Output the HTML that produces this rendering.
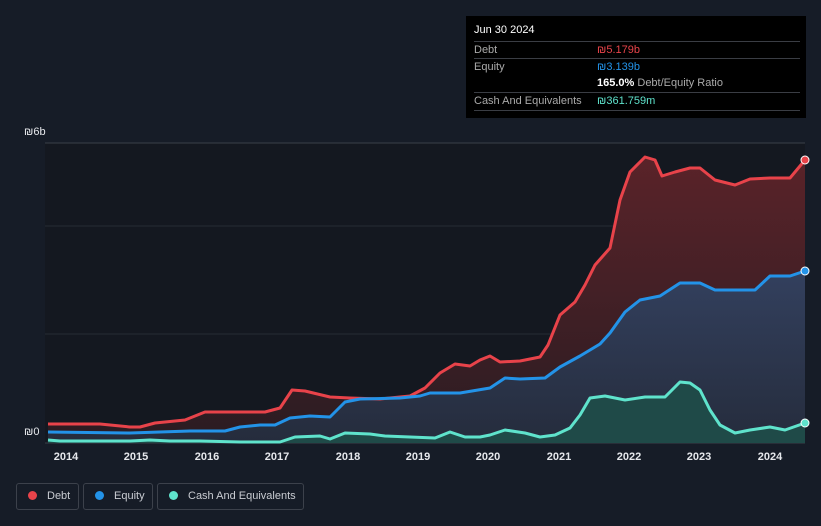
<!DOCTYPE html>
<html><head><meta charset="utf-8"><style>
body{margin:0;width:821px;height:526px;background:#161c27;font-family:"Liberation Sans",sans-serif;overflow:hidden;position:relative}
.tt{position:absolute;left:466px;top:16px;width:340px;height:102px;background:#000;color:#fff;font-size:11px}
.row{position:absolute;left:8px;width:326px;border-top:1px solid #3a3d44;height:17px;line-height:17px;color:#aaa}
.row span{position:absolute;left:123px}
.leg{position:absolute;top:483px;height:27px;border:1px solid #3c414b;border-radius:3px;color:#c9ccd2;font-size:11px;line-height:25px;box-sizing:border-box;white-space:nowrap}
.dot{display:inline-block;width:9px;height:9px;border-radius:50%;margin:0 10px 0 11px;vertical-align:-1px}
.yr{position:absolute;top:451px;color:#e6e8ec;font-size:11px;font-weight:bold;transform:translateX(-50%)}
</style></head><body>
<svg width="821" height="526" style="position:absolute;left:0;top:0">
<defs>
<linearGradient id="gd" x1="0" y1="0" x2="0" y2="1"><stop offset="0" stop-color="#5a2329"/><stop offset="1" stop-color="#2a1c22"/></linearGradient>
<linearGradient id="ge" x1="0" y1="0" x2="0" y2="1"><stop offset="0" stop-color="#33405e"/><stop offset="1" stop-color="#252c3c"/></linearGradient>
</defs>
<rect x="45" y="143" width="760" height="300" fill="#141820"/>
<line x1="45" y1="143" x2="805" y2="143" stroke="#3a3f48"/>
<line x1="45" y1="226" x2="805" y2="226" stroke="#262b34"/>
<line x1="45" y1="334" x2="805" y2="334" stroke="#262b34"/>
<line x1="45" y1="443" x2="805" y2="443" stroke="#3a3f48"/>
<path d="M48,424 L100,424 130,427 140,427 155,423 185,420 205,412 240,412 265,412 280,408 292,390 305,391 330,397 350,398 380,399 410,396 425,388 440,373 455,364 470,366 480,360 490,356 500,362 520,361 540,357 548,345 560,315 575,302 585,285 595,265 610,248 620,200 630,172 645,157 655,160 662,176 675,172 690,168 700,168 715,180 735,185 750,179 770,178 790,178 805,160 L805,443 48,443Z" fill="url(#gd)"/>
<path d="M48,432 L130,433 160,432 190,431 225,431 240,427 260,425 275,425 290,418 310,416 330,417 345,402 360,399 400,398 420,396 430,393 460,393 490,388 505,378 520,379 545,378 560,367 580,356 600,344 610,333 625,312 640,300 660,296 680,283 700,283 715,290 740,290 755,290 770,276 790,276 805,271 L805,443 48,443Z" fill="url(#ge)"/>
<path d="M48,440 L60,441 100,441 130,441 150,440 170,441 200,441 240,442 280,442 295,437 320,436 330,439 345,433 370,434 385,436 410,437 435,438 450,432 465,437 480,437 490,435 505,430 525,433 540,437 555,435 570,428 580,415 590,398 605,396 625,400 645,397 665,397 680,382 690,383 700,390 710,410 720,425 735,433 750,430 770,427 785,430 805,423 L805,443 48,443Z" fill="#1f4a48"/>
<g fill="none" stroke-width="3" stroke-linejoin="round">
<path d="M48,424 L100,424 130,427 140,427 155,423 185,420 205,412 240,412 265,412 280,408 292,390 305,391 330,397 350,398 380,399 410,396 425,388 440,373 455,364 470,366 480,360 490,356 500,362 520,361 540,357 548,345 560,315 575,302 585,285 595,265 610,248 620,200 630,172 645,157 655,160 662,176 675,172 690,168 700,168 715,180 735,185 750,179 770,178 790,178 805,160" stroke="#e8434a"/>
<path d="M48,432 L130,433 160,432 190,431 225,431 240,427 260,425 275,425 290,418 310,416 330,417 345,402 360,399 400,398 420,396 430,393 460,393 490,388 505,378 520,379 545,378 560,367 580,356 600,344 610,333 625,312 640,300 660,296 680,283 700,283 715,290 740,290 755,290 770,276 790,276 805,271" stroke="#2393e8"/>
<path d="M48,440 L60,441 100,441 130,441 150,440 170,441 200,441 240,442 280,442 295,437 320,436 330,439 345,433 370,434 385,436 410,437 435,438 450,432 465,437 480,437 490,435 505,430 525,433 540,437 555,435 570,428 580,415 590,398 605,396 625,400 645,397 665,397 680,382 690,383 700,390 710,410 720,425 735,433 750,430 770,427 785,430 805,423" stroke="#5fe3cc"/>
</g>
<circle cx="805" cy="160" r="4" fill="#e8434a" stroke="#fff" stroke-width="1"/>
<circle cx="805" cy="271" r="4" fill="#2393e8" stroke="#fff" stroke-width="1"/>
<circle cx="805" cy="423" r="4" fill="#5fe3cc" stroke="#fff" stroke-width="1"/>
<text x="24" y="135" fill="#e6e8ec" font-size="11" font-family="Liberation Sans, sans-serif">₪6b</text>
<text x="24" y="435" fill="#e6e8ec" font-size="11" font-family="Liberation Sans, sans-serif">₪0</text>
</svg>
<div class="yr" style="left:66px">2014</div><div class="yr" style="left:136px">2015</div><div class="yr" style="left:207px">2016</div><div class="yr" style="left:277px">2017</div><div class="yr" style="left:348px">2018</div><div class="yr" style="left:418px">2019</div><div class="yr" style="left:488px">2020</div><div class="yr" style="left:559px">2021</div><div class="yr" style="left:629px">2022</div><div class="yr" style="left:699px">2023</div><div class="yr" style="left:770px">2024</div>
<div class="tt">
<div style="position:absolute;left:8px;top:8px;font-size:11px">Jun 30 2024</div>
<div class="row" style="top:25px">Debt<span style="color:#e8434a">₪5.179b</span></div>
<div class="row" style="top:42px">Equity<span style="color:#2393e8">₪3.139b</span></div>
<div class="row" style="top:59px;border-top:none"><span style="color:#fff;font-weight:bold">165.0% <b style="color:#aaa;font-weight:normal">Debt/Equity Ratio</b></span></div>
<div class="row" style="top:76px">Cash And Equivalents<span style="color:#5fe3cc">₪361.759m</span></div>
<div class="row" style="top:94px;height:0"></div>
</div>
<div class="leg" style="left:16px;width:63px"><span class="dot" style="background:#e8434a"></span>Debt</div>
<div class="leg" style="left:83px;width:70px"><span class="dot" style="background:#2393e8"></span>Equity</div>
<div class="leg" style="left:157px;width:147px"><span class="dot" style="background:#5fe3cc"></span>Cash And Equivalents</div>
</body></html>
